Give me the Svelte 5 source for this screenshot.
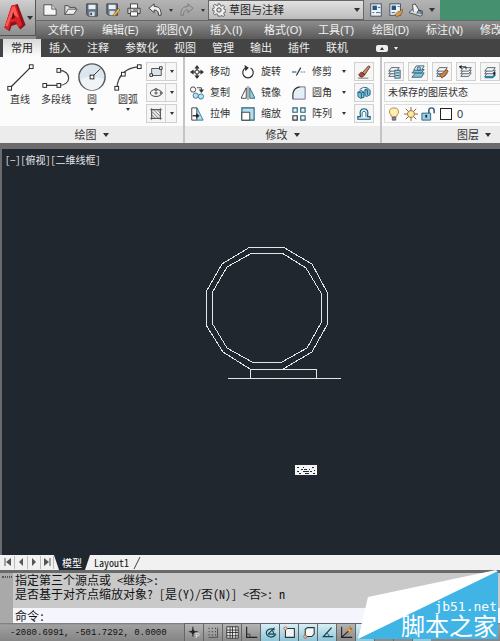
<script lang="ts">
    const menus = ['文件(F)', '编辑(E)', '视图(V)', '插入(I)', '格式(O)', '工具(T)', '绘图(D)', '标注(N)', '修改(M)'];
    const tabs = ['常用', '插入', '注释', '参数化', '视图', '管理', '输出', '插件', '联机'];

    const drawTools = [
        { icon: 'line', label: '直线', menu: false },
        { icon: 'pline', label: '多段线', menu: false },
        { icon: 'circle', label: '圆', menu: true },
        { icon: 'arc', label: '圆弧', menu: true }
    ];
    const shapes = ['rect', 'ellipse', 'hatch'];

    const modifyTools = [
        { icon: 'move', label: '移动' },
        { icon: 'rotate', label: '旋转' },
        { icon: 'trim', label: '修剪', menu: true },
        { icon: 'copy', label: '复制' },
        { icon: 'mirror', label: '镜像' },
        { icon: 'fillet', label: '圆角', menu: true },
        { icon: 'stretch', label: '拉伸' },
        { icon: 'scale', label: '缩放' },
        { icon: 'array', label: '阵列', menu: true }
    ];
    const modifyExtras = ['erase', 'explode', 'offset'];
    const layerTools = ['layerprops', 'layeroff', 'layermatch', 'layerprev', 'layeriso', 'layerfreeze'];

    const statusToggles = [
        { icon: 'infer', on: false },
        { icon: 'snap', on: false },
        { icon: 'grid', on: false },
        { icon: 'ortho', on: false },
        { icon: 'polar', on: true },
        { icon: 'osnap', on: true },
        { icon: 'osnap3d', on: true },
        { icon: 'otrack', on: true },
        { icon: 'ducs', on: false },
        { icon: 'dyn', on: true },
        { icon: 'lwt', on: false },
        { icon: 'tpy', on: false },
        { icon: 'qp', on: true }
    ];

    let activeTab = '常用';
    let command = '';

    const layerSheets = '<g fill="#f4f8fa" stroke="#4a5560"><path d="M5 9h9l-3 4H2z"/><path d="M5 6h9l-3 4H2z"/><path d="M5 3h9l-3 4H2z"/></g>';

    // every icon sits on a 16x16 grid, the big draw tools on 32x32
    const icons: Record<string, string> = {
        new: '<path d="M1 2h9l5 5v7H1z" fill="#f6f6f6" stroke="#444"/><path d="M10 2v5h5" stroke="#555" fill="#ddd"/>',
        open: '<path d="M1 13V3h4l1 2h7v2" fill="#ddd" stroke="#444"/><path d="M1 13l4-6h10l-4 6z" fill="#e8eef2" stroke="#444"/>',
        save: '<path d="M2 1h12v14H4l-2-2z" fill="#60788e" stroke="#333"/><path d="M4 2h8v5H4z" fill="#eee"/><path d="M5 10h6v5H5z" fill="#ddd"/><path d="M6 11h2v3H6z" fill="#445"/>',
        saveas: '<path d="M1 1h12v13H3l-2-2z" fill="#60788e" stroke="#333"/><path d="M3 2h8v5H3z" fill="#eee"/><path d="M4 9h6v5H4z" fill="#ddd"/><path d="M8 14l6-8 2 2-6 7z" fill="#eab858" stroke="#77561d" stroke-width=".7"/>',
        print: '<path d="M4 6V1h8v5" fill="#fff" stroke="#333"/><path d="M1 6h14v6H1z" fill="#d8d8d8" stroke="#333"/><path d="M4 10h8v5H4z" fill="#fff" stroke="#333"/><path d="M3 8h2M7 8h6" stroke="#333"/>',
        undo: '<path d="M1 6l6-5v3c6 0 8 3 8 10h-3c0-4-1-6-5-6v3z" fill="#eceff2" stroke="#333"/>',
        redo: '<path d="M15 6L9 1v3C3 4 1 7 1 14h3c0-4 1-6 5-6v3z" fill="#aaa" stroke="#777"/>',
        gear: '<path d="M7 1h2l.6 2 1.5.6 1.9-1 1.4 1.4-1 1.9.6 1.5 2 .6v2l-2 .6-.6 1.5 1 1.9-1.4 1.4-1.9-1-1.5.6L9 15H7l-.6-2-1.5-.6-1.9 1L1.6 12l1-1.9L2 8.600 0 8V7l2-.6.6-1.5-1-1.900L3 1.600l1.900 1L6.400 3z" fill="#eee" stroke="#444" stroke-width=".9"/><circle cx="8" cy="8" r="2.500" fill="#ddd" stroke="#444"/>',
        palette: '<rect x="2" y="1" width="12" height="14" fill="#eef3f7" stroke="#346"/><rect x="4" y="3" width="5" height="5" fill="#27557c"/><path d="M4 11h2M8 11h5M10 5h3" stroke="#456"/>',
        sheet: '<rect x="1" y="1" width="12" height="13" fill="#eef3f7" stroke="#346"/><rect x="3" y="3" width="5" height="5" fill="#27557c"/><path d="M3 11h4M10 4h2" stroke="#456"/><path d="M7 13l4-4 1 1 3-3 1 1-2 5-5 3z" fill="#d59a4b" stroke="#7a4c16" stroke-width=".7"/>',
        render: '<path d="M0 11l4-4 11 2 1 4-3 2z" fill="#d5dbe0" stroke="#444"/><path d="M5 10L4 2l3-1 5 8" fill="#f1f1f1" stroke="#444"/><path d="M9 12l2-4 3 2v3" fill="#7ca0bb" stroke="#345"/>',
        line: '<path d="M5 28L28 5" stroke="#333" stroke-width="1.300"/><g fill="#fff" stroke="#222"><rect x="3" y="26" width="4" height="4"/><rect x="26" y="3" width="4" height="4"/></g>',
        pline: '<path d="M4 25h15c14 0 14-16 0-16" stroke="#444" fill="none" stroke-width="1.300"/><g fill="#fff" stroke="#222"><rect x="2" y="23" width="4" height="4"/><rect x="17" y="23" width="4" height="4"/><rect x="17" y="7" width="4" height="4"/></g>',
        circle: '<circle cx="16" cy="16" r="14" fill="#dce6ef" stroke="#555" stroke-width="1.500"/><path d="M4 18a12 12 0 0 0 24 0q-12-5-24 0" fill="#eff4f7"/><path d="M16 16l9-9" stroke="#333"/><rect x="14" y="14" width="4" height="4" fill="#fff" stroke="#222"/>',
        arc: '<path d="M4 28Q6 7 28 5" stroke="#444" fill="none" stroke-width="1.300"/><g fill="#fff" stroke="#222"><rect x="2" y="26" width="4" height="4"/><rect x="9" y="11" width="4" height="4"/><rect x="26" y="3" width="4" height="4"/></g>',
        rect: '<path d="M3 4h11v8H3z" fill="#dce4ea" stroke="#444"/><g fill="#fff" stroke="#222"><path d="M1 10h3v3H1zM12 2h3v3h-3z"/></g>',
        ellipse: '<ellipse cx="8" cy="8" rx="6.500" ry="4" fill="#f0f4f6" stroke="#333"/><path d="M7 7h2v2H7zM7 3h2v2H7zM13 7h2v2h-2z" fill="#fff" stroke="#222" stroke-width=".8"/>',
        hatch: '<path d="M3 3h10v10H3z" fill="#e8ecee" stroke="#444"/><path d="M1 3h14M3 1v14M13 1v14M1 13h14" stroke="#555" stroke-width=".8"/><path d="M3 5l8 8M3 9l4 4M5 3l8 8M9 3l4 4" stroke="#555" stroke-width=".8"/>',
        move: '<path d="M8 0l3 4H5zM8 16l3-4H5zM0 8l4-3v6zM16 8l-4-3v6z" fill="#333"/><path d="M8 3v3M8 10v3M3 8h3M10 8h3" stroke="#333" stroke-width="1.500"/><path d="M6 6h4v4H6z" fill="#fff" stroke="#333"/>',
        rotate: '<path d="M5 3.500a6 6 0 1 0 6 0" fill="none" stroke="#333" stroke-width="1.400"/><path d="M4 0l5 3-4 4z" fill="#333"/>',
        trim: '<path d="M0 8h5" stroke="#2a7c99" stroke-width="1.500"/><path d="M5 12l5-9" stroke="#333" stroke-width="1.300"/><path d="M10 8h6" stroke="#2a7c99" stroke-dasharray="2 1"/>',
        copy: '<circle cx="3.500" cy="4" r="3" fill="#fff" stroke="#333"/><circle cx="6.500" cy="11" r="3" fill="#bfe1ef" stroke="#2a7294"/><circle cx="12.500" cy="12" r="3" fill="#bfe1ef" stroke="#2a7294"/><path d="M8 2h5v3" fill="none" stroke="#333"/><path d="M10 4h6l-3 4z" fill="#333"/>',
        mirror: '<path d="M6 2v12H0z" fill="#fff" stroke="#333"/><path d="M10 2v12h6z" fill="#9bcde2" stroke="#2a6078"/><path d="M8 0v16" stroke="#555"/>',
        fillet: '<path d="M1 15V9q1-7 8-8h6v14z" fill="#e3eff5"/><path d="M1 15V9q1-7 8-8" fill="none" stroke="#333" stroke-width="1.300"/><path d="M9 1h6v14H1" fill="none" stroke="#668" />',
        stretch: '<path d="M2 1h6v14H2z" fill="#fff" stroke="#333"/><path d="M8 1l7 14H8z" fill="#b5deef" stroke="#2a7294"/><path d="M3 10h5" stroke="#222" stroke-width="1.500"/><path d="M7 7l4 3-4 3z" fill="#222"/>',
        scale: '<path d="M1 1h14v14H1z" fill="#b5deef" stroke="#2a6078" stroke-width="1.300"/><path d="M1 6h9v9H1z" fill="#fff" stroke="#333"/>',
        array: '<g fill="#e5f2f7" stroke="#2a6078" stroke-width="1.300"><path d="M1 1h5v5H1zM10 1h5v5h-5zM10 10h5v5h-5z"/><path d="M1 10h5v5H1z" stroke="#333"/></g>',
        erase: '<path d="M6 9l7-8 2 1-6 9z" fill="#c5916a" stroke="#5b392a"/><path d="M2 11l3-3 4 3-3 3q-3 0-4-3z" fill="#b34532" stroke="#5b241b"/><path d="M1 15h12" stroke="#666"/>',
        explode: '<g fill="#79bfdc" stroke="#1c5c78"><path d="M1 7l4-2 3 2v6l-4 1-3-2zM9 4l4-1 2 2v5l-4 2-2-1z"/></g><path d="M1 7l4 1v6M5 8l3-1M9 4l3 1v5" stroke="#1c5c78" fill="none"/><path d="M3 4q4-4 9-2" stroke="#1c5c78" fill="none"/>',
        offset: '<path d="M1 14v-3h3q-2-9 4-9t4 9h3v3z" fill="#d9eef6" stroke="#1c5c78" stroke-width="1.300"/><path d="M6 11q-1-6 2-6t2 6" fill="#fff" stroke="#1c5c78"/>',
        layerprops: layerSheets + '<rect x="9" y="6" width="6" height="9" fill="#b3d8ea" stroke="#356"/><path d="M10 9h4M10 12h4" stroke="#356"/>',
        layeroff: '<g fill="#7dc2dc" stroke="#34576a"><path d="M5 9h10l-3 5H1z"/><path d="M5 5h10l-3 4H1z"/><path d="M6 1h9l-3 5H3z" fill="#e6f4fa"/></g><circle cx="9" cy="4" r="2" fill="#9bd0e5" stroke="#34576a"/>',
        layermatch: layerSheets + '<path d="M5 11l4-2 4-4 2 2-3 4-4 4z" fill="#c98646" stroke="#79461a"/>',
        layerprev: layerSheets + '<path d="M0 2h8v3" fill="none" stroke="#222"/><path d="M3 0v5L0 2z" fill="#222"/>',
        layeriso: layerSheets + '<path d="M2 14h9l3-3" stroke="#1b82aa" stroke-width="2" fill="none"/><path d="M11 10l3-3v5z" fill="#222"/>',
        layerfreeze: layerSheets,
        bulb: '<path d="M5 11q0-2-2-4Q2 1 8 1t5 6q-2 2-2 4z" fill="#ffeeb0" stroke="#a88338"/><path d="M6 12h4v3H6z" fill="#889" stroke="#556"/>',
        sun: '<path d="M8 0v16M0 8h16M2 2l12 12M14 2L2 14" stroke="#7b5a30"/><circle cx="8" cy="8" r="4" fill="#ffe8a0" stroke="#8f6a3a"/>',
        lock: '<path d="M9 7V4q0-3 3-3t3 3v3" fill="none" stroke="#357" stroke-width="1.700"/><path d="M1 7h10v8H1z" fill="#9bcbe0" stroke="#235d78"/><path d="M6 9v3" stroke="#123" stroke-width="2"/>',
        infer: '<path d="M6 1v12M1 7h11" stroke="#222" stroke-width="1.300"/><path d="M6 4l3 3-3 3-3-3z" fill="#222"/><path d="M10 15V9h3q2 2 0 3h-3" stroke="#eee" fill="none"/>',
        snap: '<path d="M2 3h1M6 3h1M10 3h1M2 7h1M6 7h1M10 7h1M2 11h1M6 11h1M10 11h1" stroke="#333" stroke-width="1.500"/><path d="M13 2v12H2" stroke="#444" fill="none"/>',
        grid: '<path d="M1 1h14v14H1z" fill="#eee"/><path d="M1 1v14M5 1v14M8 1v14M12 1v14M15 1v14M1 1h14M1 5h14M1 8h14M1 12h14M1 15h14" stroke="#222"/>',
        ortho: '<path d="M2 1v13h13" stroke="#222" stroke-width="1.400" fill="none"/><path d="M2 10h4v4" stroke="#333" fill="none"/>',
        polar: '<path d="M13 5a6 5 0 1 0 1 6" fill="none" stroke="#174452" stroke-width="1.500"/><path d="M5 10h10M5 10l8-8M10 5q2 2 2 5" fill="none" stroke="#174452" stroke-width="1.300"/>',
        osnap: '<path d="M3 3h11v11H3z" fill="#eef5f7" stroke="#333" stroke-width="1.300"/><circle cx="3" cy="3" r="2" fill="#f5cfb8" stroke="#b6653d"/>',
        osnap3d: '<path d="M4 4l3-2h8v8l-3 3H4z" fill="#f3f8f9" stroke="#333" stroke-width="1.300"/><circle cx="4" cy="13" r="2" fill="#f4ba98" stroke="#b65a2d"/>',
        otrack: '<path d="M13 2L3 13h12" fill="none" stroke="#174452" stroke-width="1.600"/><path d="M7 9q3 1 3 4" fill="none" stroke="#174452"/>',
        ducs: '<path d="M2 1v13h13M2 14L14 3" fill="none" stroke="#222" stroke-width="1.300"/><path d="M13 0L8 6h3l-2 5 6-7h-3z" fill="#f4b04e" stroke="#b76b1e" stroke-width=".6"/>',
        dyn: '<path d="M3 1v14M1 8h5" stroke="#234"/><path d="M8 5h7v7H8z" fill="#fff" stroke="#234"/>',
        lwt: '<path d="M1 4h14" stroke="#222"/><path d="M1 8h14" stroke="#222" stroke-width="2"/><path d="M1 13h14" stroke="#222" stroke-width="3"/>',
        tpy: '<path d="M2 2h12v12H2z" fill="#bbb" stroke="#333"/>',
        qp: '<path d="M2 2h12v13H2z" fill="#eee" stroke="#333"/><path d="M4 10h8v5H4z" fill="#2a8a3e"/>'
    };
</script>

{#snippet icon(name, size = 14, box = 16)}
    <svg class="icon" width={size} height={size} viewBox="0 0 {box} {box}" fill="none" aria-hidden="true">{@html icons[name]}</svg>
{/snippet}

<div class="app">
    <header class="top">
        <button class="app-btn" aria-label="应用程序菜单">
            <svg width="22" height="30" viewBox="0 0 24 34" aria-hidden="true">
                <path d="M8 3L15 1 24 25 18 30 14 24 8 26 6 32 0 28z" fill="#8e1419" />
                <path d="M8 3L13 2 20 25 16 28 13 21 7 22 5 30 0 28z" fill="#dc2428" />
                <path d="M9 4L12 4 16 17 12 14 7 17 4 26 1 26z" fill="#ff5a56" />
                <path d="M10 10L12 17 8 18z" fill="#4f0e12" />
            </svg>
            <i class="arrow"></i>
        </button>
        <div class="top-main">
            <div class="title-bar">
                <div class="quick">
                    {#each ['new', 'open', 'save', 'saveas', 'print', 'undo'] as name}
                        <button class="flat" aria-label={name}>{@render icon(name)}</button>
                    {/each}
                    <i class="arrow small"></i>
                    <button class="flat" aria-label="redo">{@render icon('redo')}</button>
                    <i class="arrow small"></i>
                </div>
                <div class="workspace">
                    {@render icon('gear', 14)}
                    <select aria-label="工作空间">
                        <option>草图与注释</option>
                    </select>
                    <i class="arrow"></i>
                </div>
                <div class="quick extra">
                    {#each ['palette', 'sheet', 'render'] as name}
                        <button class="flat" aria-label={name}>{@render icon(name)}</button>
                    {/each}
                    <i class="arrow"></i>
                </div>
                <div class="caption"></div>
            </div>
            <nav class="menu">
                {#each menus as m}
                    <button class="menu-item">{m}</button>
                {/each}
            </nav>
        </div>
    </header>

    <nav class="tabs">
        {#each tabs as t}
            <button class="tab" class:active={t === activeTab} on:click={() => (activeTab = t)}>{t}</button>
        {/each}
        <button class="pill" aria-label="最小化"><i class="up"></i></button>
        <i class="arrow light"></i>
    </nav>

    <section class="ribbon">
        <div class="panel draw">
            <div class="panel-body">
                {#each drawTools as tool}
                    <button class="big">
                        {@render icon(tool.icon, 30, 32)}
                        <span>{tool.label}</span>
                        {#if tool.menu}<i class="arrow small"></i>{/if}
                    </button>
                {/each}
                <div class="stack">
                    {#each shapes as s}
                        <button class="split" aria-label={s}>
                            <span class="split-icon">{@render icon(s)}</span>
                            <i class="arrow small"></i>
                        </button>
                    {/each}
                </div>
            </div>
            <button class="panel-title">绘图 <i class="arrow"></i></button>
        </div>

        <div class="panel modify">
            <div class="panel-body">
                <div class="tool-grid">
                    {#each modifyTools as tool}
                        <button class="tool">
                            {@render icon(tool.icon)}
                            <span>{tool.label}</span>
                            {#if tool.menu}<i class="arrow small"></i>{/if}
                        </button>
                    {/each}
                </div>
                <div class="stack">
                    {#each modifyExtras as name}
                        <button class="boxed" aria-label={name}>{@render icon(name)}</button>
                    {/each}
                </div>
            </div>
            <button class="panel-title">修改 <i class="arrow"></i></button>
        </div>

        <div class="panel layers">
            <div class="panel-body column">
                <div class="layer-tools">
                    {#each layerTools as name}
                        <button class="boxed" aria-label={name}>{@render icon(name)}</button>
                    {/each}
                </div>
                <select class="layer-state" aria-label="图层状态">
                    <option>未保存的图层状态</option>
                </select>
                <div class="layer-row">
                    {@render icon('bulb')}
                    {@render icon('sun')}
                    {@render icon('lock')}
                    <span class="swatch"></span>
                    <span>0</span>
                </div>
            </div>
            <button class="panel-title">图层 <i class="arrow"></i></button>
        </div>
    </section>

    <main class="canvas">
        <div class="view-label">[−][俯视][二维线框]</div>
        <svg class="drawing" width="498" height="380" viewBox="2 171 498 380" fill="none" stroke="#e4e6e8" shape-rendering="crispEdges">
            <path d="M250 247H283L312 264 327 292V325L312 352 283 369H250L223 352 206 325V292L222 264Z" />
            <path d="M252 253H282L306 268 321 293V323L307 348 282 362H252L227 348 212 323V293L227 267Z" />
            <path d="M250 378V369H316V378M228 378H341" />
            <path d="M295 465H317V475H295Z" fill="#f4f4f4" stroke="none" />
            <path d="M297 467h2M301 469h2M297 471h2M299 473h2M303 467h1M304 469h3M303 471h6M305 473h4M309 469h1M312 467h2M310 471h2M314 470h1M313 473h2" stroke="#20272f" />
        </svg>
    </main>

    <div class="layouts">
        <div class="pager">
            <button aria-label="第一个"><svg width="12" height="12" viewBox="0 0 12 12"><path d="M3 2v8" stroke="#555" /><path d="M9 2v8L4 6z" fill="#555" /></svg></button>
            <button aria-label="上一个"><svg width="12" height="12" viewBox="0 0 12 12"><path d="M8 2v8L4 6z" fill="#555" /></svg></button>
            <button aria-label="下一个"><svg width="12" height="12" viewBox="0 0 12 12"><path d="M4 2v8l4-4z" fill="#555" /></svg></button>
            <button aria-label="最后一个"><svg width="12" height="12" viewBox="0 0 12 12"><path d="M9 2v8" stroke="#555" /><path d="M3 2v8l5-4z" fill="#555" /></svg></button>
        </div>
        <button class="layout current">模型</button>
        <button class="layout">Layout1</button>
        <svg width="8" height="14" viewBox="0 0 8 14" aria-hidden="true"><path d="M1 13L7 1" stroke="#444" /></svg>
    </div>

    <section class="command">
        <div class="grip"></div>
        <div class="command-main">
            <div class="history">
                <div>指定第三个源点或 &lt;继续&gt;:</div>
                <div>是否基于对齐点缩放对象? [是(Y)/否(N)] &lt;否&gt;: n</div>
            </div>
            <div class="prompt">
                <label for="cmd">命令:</label>
                <input id="cmd" type="text" bind:value={command} />
            </div>
        </div>
    </section>

    <footer class="status">
        <span class="coords">-2080.6991, -501.7292, 0.0000</span>
        {#each statusToggles as s}
            <button class="toggle" class:on={s.on} aria-label={s.icon}>{@render icon(s.icon, 13)}</button>
        {/each}
    </footer>

    <div class="watermark">
        <svg width="142" height="71" viewBox="0 0 142 71" aria-hidden="true">
            <path d="M0 69L10 27 138 0 140 2 140 69z" fill="#fff" />
            <path d="M0 69L140 1V69z" fill="#41b4e6" />
        </svg>
        <div class="mark-text">
            <span class="site">jb51.net</span>
            <span class="name">脚本之家</span>
        </div>
    </div>
</div>

<style>
    :global(body) { background: #8c8c8c; }
    .app {
        position: relative;
        display: flex;
        flex-direction: column;
        min-height: 100vh;
        overflow: hidden;
        font-family: "Liberation Sans", "Noto Sans CJK SC", sans-serif;
        font-size: 11px;
        line-height: 16px;
        color: #333;
    }
    button, select, input {
        margin: 0;
        padding: 0;
        border: 0;
        border-radius: 0;
        background: none;
        font: inherit;
        color: inherit;
        appearance: none;
        white-space: nowrap;
    }
    .icon { display: block; flex: none; }
    .arrow {
        flex: none;
        width: 0;
        height: 0;
        border: 3px solid transparent;
        border-top: 4px solid #333;
        border-bottom: 0;
    }
    .arrow.small { border-width: 3px 2px 0; }
    .arrow.light { border-width: 3px 2px 0; border-top-color: #eee; }

    .top { display: flex; height: 39px; background: #8c8c8c; }
    .app-btn {
        flex: none;
        display: flex;
        align-items: center;
        gap: 1px;
        width: 36px;
        height: 36px;
        padding-left: 4px;
        background: linear-gradient(#cfcfcf, #8e8e8e);
        border-right: 1px solid #555;
        border-bottom: 1px solid #555;
        box-sizing: border-box;
    }
    .top-main { flex: 1; min-width: 0; display: flex; flex-direction: column; }
    .title-bar { display: flex; height: 21px; background: linear-gradient(#b4b4b4, #9c9c9c); border-bottom: 1px solid #666; box-sizing: border-box; }
    .quick { flex: none; display: flex; align-items: center; gap: 7px; width: 172px; padding-left: 7px; box-sizing: border-box; }
    .quick.extra { width: 76px; padding-left: 5px; gap: 6px; }
    .workspace {
        flex: none;
        display: flex;
        align-items: center;
        gap: 3px;
        width: 156px;
        padding: 0 3px;
        box-sizing: border-box;
        border: 1px solid #666;
        background: linear-gradient(#e2e2e2, #bcbcbc);
        color: #222;
    }
    .workspace select { flex: 1; }
    .caption { flex: 1; background: #45906f; }
    .menu { display: flex; flex: 1; overflow: hidden; background: linear-gradient(#8d8d8d, #5a5a5a); color: #f2f2f2; padding-left: 12px; }
    .menu-item { flex: none; width: 54px; text-align: left; }

    .tabs { display: flex; align-items: center; height: 18px; background: #444; color: #eee; padding-left: 3px; }
    .tab { height: 18px; padding: 0 8px; }
    .tab.active { background: linear-gradient(#d8d8d8, #fdfdfd); color: #222; }
    .pill { display: flex; align-items: center; justify-content: center; width: 12px; height: 7px; margin: 0 6px 0 20px; background: #eee; border-radius: 2px; }
    .up { border: 2px solid transparent; border-bottom: 3px solid #333; border-top: 0; }

    .ribbon { display: flex; height: 86px; background: #fcfcfc; border-bottom: 6px solid #6b6b6e; overflow: hidden; font-size: 10px; line-height: 12px; }
    .panel { flex: none; display: flex; flex-direction: column; border-right: 2px solid #c4c4c4; box-sizing: border-box; }
    .panel-body { flex: 1; display: flex; padding-top: 5px; }
    .panel-body.column { flex-direction: column; gap: 2px; }
    .panel-title { display: flex; align-items: center; justify-content: center; gap: 6px; height: 17px; background: #ececec; font-size: 11px; }
    .draw { width: 185px; }
    .modify { width: 197px; }
    .layers { width: 186px; }
    .draw .panel-body { padding-left: 2px; }
    .big { display: flex; flex-direction: column; align-items: center; gap: 2px; width: 36px; height: 60px; }
    .stack { display: flex; flex-direction: column; gap: 2px; }
    .split { display: flex; align-items: center; gap: 4px; width: 31px; height: 19px; border: 1px solid #d0d0d0; box-sizing: border-box; background: #f6f6f6; }
    .split-icon { display: flex; align-items: center; padding: 0 2px; height: 17px; border-right: 1px solid #d0d0d0; }
    .tool-grid { flex: none; display: grid; grid-template-columns: 51px 51px 62px; grid-auto-rows: 21px; padding-left: 5px; }
    .tool { display: flex; align-items: center; gap: 6px; height: 19px; }
    .tool .arrow { margin-left: 4px; }
    .boxed { flex: none; display: flex; align-items: center; justify-content: center; width: 20px; height: 19px; border: 1px solid #d0d0d0; box-sizing: border-box; background: #f6f6f6; }
    .layer-tools { display: flex; gap: 4px; padding-left: 2px; }
    .layer-state { height: 19px; padding-left: 3px; margin-left: 2px; border: 1px solid #ddd; box-sizing: border-box; background: #fafafa; }
    .layer-row { display: flex; align-items: center; gap: 3px; height: 19px; margin-left: 2px; padding-left: 2px; border: 1px solid #ddd; box-sizing: border-box; font-size: 11px; }
    .swatch { width: 12px; height: 12px; border: 1px solid #222; box-sizing: border-box; margin: 0 2px; background: #fff; }

    .canvas { flex: 1; min-height: 380px; background: #20272f; border-left: 2px solid #6b6b6e; overflow: hidden; }
    .view-label {
        height: 22px;
        padding: 3px 0 0 3px;
        box-sizing: border-box;
        font-family: "Noto Sans CJK SC", sans-serif;
        font-size: 10px;
        font-feature-settings: "hwid";
        color: #e8e8e8;
    }
    .drawing { display: block; }

    .layouts { display: flex; align-items: center; height: 15px; background: #f1f1f1; padding-left: 2px; font-family: "Noto Sans CJK SC", sans-serif; line-height: 15px; }
    .pager { display: flex; }
    .pager button { display: flex; width: 13px; height: 13px; border-right: 1px solid #bbb; box-sizing: border-box; }
    .layout { height: 15px; padding: 0 4px; font-size: 10px; font-feature-settings: "hwid"; color: #111; }
    .layout.current { background: #20272f; color: #fff; padding: 0 8px; clip-path: polygon(0 0, 100% 0, 86% 100%, 14% 100%); }

    .command { display: flex; border-top: 3px solid #696969; background: #a9a9a9; font-family: "Noto Sans CJK SC", sans-serif; font-size: 12px; line-height: 14px; font-feature-settings: "hwid"; color: #111; }
    .grip { flex: none; width: 10px; height: 2px; margin: 3px 1px 0 2px; border-top: 1px dotted #555; border-bottom: 1px dotted #555; box-sizing: border-box; }
    .command-main { flex: 1; background: #c9c9c9; }
    .history { height: 35px; padding-left: 2px; }
    .prompt { display: flex; align-items: center; height: 15px; background: #f5f5fd; padding-left: 2px; }
    .prompt input { flex: 1; min-width: 0; }

    .status { display: flex; height: 18px; background: linear-gradient(#777 0, #a0a0a0 2px, #858585); overflow: hidden; }
    .coords { flex: none; width: 184px; padding-left: 10px; box-sizing: border-box; font-family: "Liberation Mono", monospace; font-size: 9px; line-height: 20px; color: #111; }
    .toggle { flex: none; display: flex; align-items: center; justify-content: center; width: 19px; height: 18px; border-left: 1px solid #666; border-top: 1px solid #666; box-sizing: border-box; background: linear-gradient(#b4b4b4, #8a8a8a); }
    .toggle.on { background: linear-gradient(#d8eef4, #8fc6d8); }

    /* site mark laid over the lower right corner */
    .watermark { position: absolute; right: 0; bottom: 0; width: 142px; height: 71px; pointer-events: none; }
    .watermark svg { display: block; }
    .mark-text { position: absolute; right: 3px; bottom: 4px; display: flex; flex-direction: column; align-items: flex-end; color: #fff; }
    .site { font-family: "DejaVu Sans Mono", monospace; font-size: 13px; line-height: 13px; }
    .name { font-family: "Noto Sans CJK SC", sans-serif; font-size: 24px; line-height: 24px; }
</style>
